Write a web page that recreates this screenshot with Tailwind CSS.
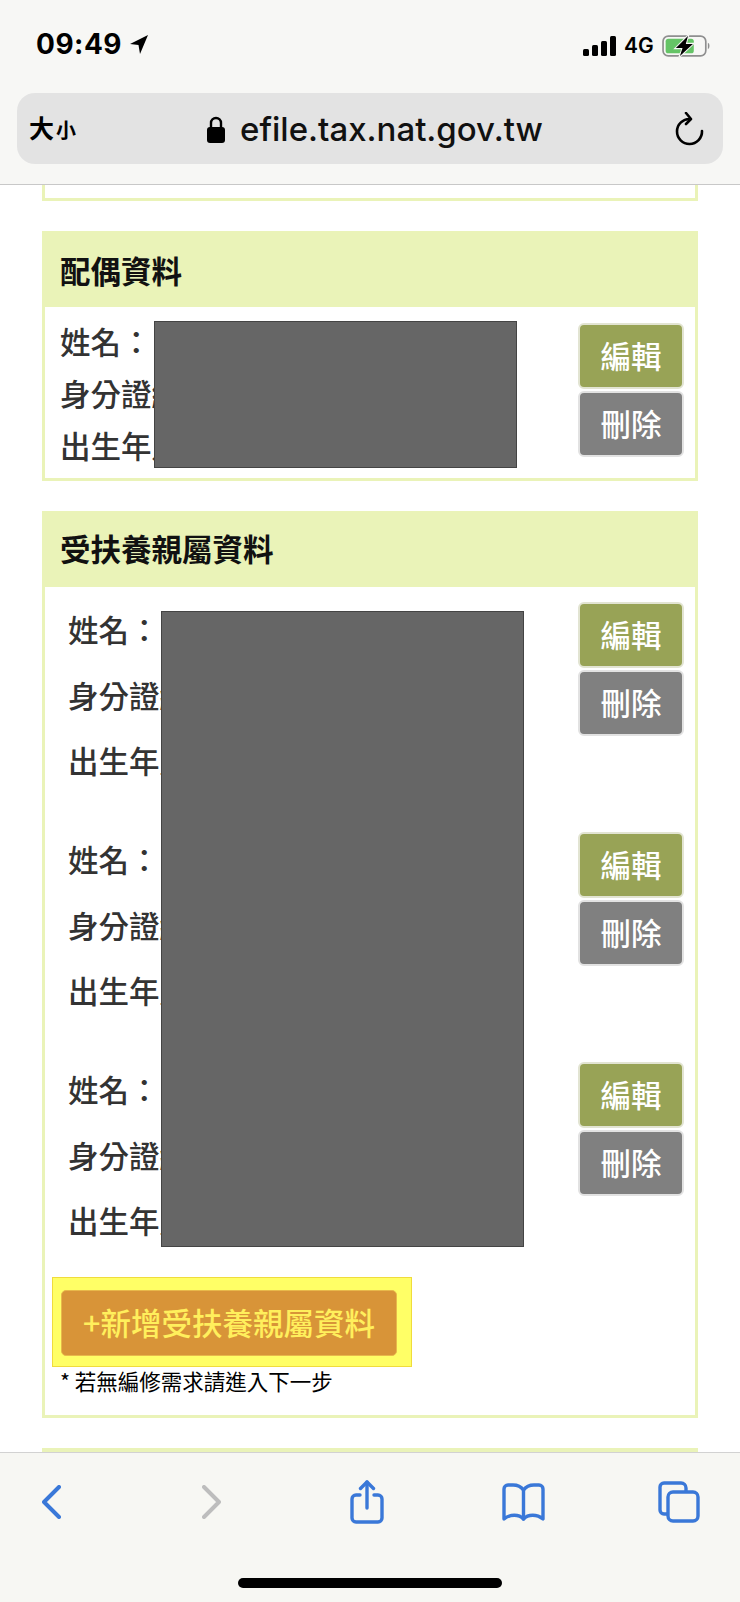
<!DOCTYPE html>
<html lang="zh-TW">
<head>
    <meta charset="UTF-8">
    <meta name="viewport" content="width=device-width, initial-scale=1.0">
    <title>efile.tax.nat.gov.tw</title>
    <script src="https://cdn.jsdelivr.net/npm/@tailwindcss/browser@4"></script>
</head>
<body class="bg-white font-['Noto_Sans_CJK_TC','Noto_Sans',sans-serif]">
<div class="w-[740px] h-[1602px] flex flex-col overflow-hidden">

    <!-- Status bar + address bar -->
    <header class="h-[185px] shrink-0 bg-[#f7f7f5] border-b border-[#c8c8c8]">
        <div class="h-[93px] flex items-start">
            <div class="flex items-center pl-[36px] pt-[28px] w-[300px]">
                <span class="font-['Inter',sans-serif] font-bold text-[28px] leading-[32px] text-black tracking-[0.5px]">09:49</span>
                <svg class="ml-[8px]" width="18" height="19" viewBox="0 0 18 19"><path d="M18 0 L0 9 L8.5 10 L10 19 Z" fill="#000"/></svg>
            </div>
            <div class="flex items-center ml-auto pt-[34px]">
                <svg width="33" height="20" viewBox="0 0 33 20" fill="#000">
                    <rect x="0" y="13" width="6" height="7" rx="1.5"/>
                    <rect x="9" y="9" width="6" height="11" rx="1.5"/>
                    <rect x="18" y="5" width="6" height="15" rx="1.5"/>
                    <rect x="27" y="0" width="6" height="20" rx="1.5"/>
                </svg>
                <span class="ml-[8px] w-[30px] font-['Inter',sans-serif] font-semibold text-[21px] leading-[20px] text-black">4G</span>
                <svg class="ml-[8px] mr-[29px]" width="49" height="24" viewBox="0 0 47 23">
                    <rect x="1" y="2" width="41" height="19" rx="5" fill="none" stroke="#8f8f8f" stroke-width="1.6"/>
                    <rect x="3.5" y="4.5" width="27" height="14" rx="2.5" fill="#65c466"/>
                    <path d="M44 8.500 C46 9 46 14 44 14.500 Z" fill="#8f8f8f"/>
                    <path d="M26 0 L12 14 H19 L16 23 L31 9 H23.500 Z" fill="#000" stroke="#f7f7f5" stroke-width="1"/>
                </svg>
            </div>
        </div>
        <div class="mx-[17px] w-[706px] h-[71px] rounded-[18px] bg-[#e3e3e3] flex items-center relative">
            <div class="pl-[12px] flex items-baseline text-black font-bold w-[190px]">
                <span class="text-[25px] leading-[30px]">大</span><span class="text-[20px] leading-[30px] ml-[2px]">小</span>
            </div>
            <svg width="18" height="27" viewBox="0 0 18 27" class="mt-[1px]">
                <path d="M4 12 V7 a5 5 0 0 1 10 0 V12" fill="none" stroke="#000" stroke-width="2.400"/>
                <rect x="0" y="11" width="18" height="16" rx="3" fill="#000"/>
            </svg>
            <span class="ml-[15px] font-['Inter',sans-serif] font-medium text-[33px] leading-[40px] text-[#111]">efile.tax.nat.gov.tw</span>
            <svg class="ml-auto mr-[18px]" width="30" height="34" viewBox="0 0 30 34" fill="none" stroke="#000" stroke-width="2.600" stroke-linecap="round" stroke-linejoin="round">
                <path d="M15 7 A12.500 12.500 0 1 0 27 19"/>
                <path d="M11 1 L16 7 L11 12"/>
            </svg>
        </div>
    </header>

    <!-- Page -->
    <main class="flex-1 min-h-0 overflow-hidden">
        <div class="mx-[42px] w-[656px] h-[16px] border-x-[3px] border-b-[3px] border-[#eaf3b8]"></div>

        <!-- 配偶資料 -->
        <section class="relative mx-[42px] w-[656px] mt-[30px] border-x-[3px] border-b-[3px] border-[#eaf3b8]">
            <h2 class="-mx-[3px] h-[76px] pl-[18px] pt-[3px] bg-[#eaf3b8] flex items-center text-[30.5px] font-bold text-[#111]">配偶資料</h2>
            <div class="h-[171px] pl-[15px] pr-[11px] flex justify-between">
                <div class="pt-[8px] text-[30.5px] leading-[52px] font-medium text-[#333]">
                    <div>姓名：</div>
                    <div>身分證統一編號：</div>
                    <div>出生年月日：</div>
                </div>
                <div class="pt-[16px] flex flex-col gap-[2px]">
                    <button class="w-[106px] h-[66px] rounded-[6px] border-2 border-[#e2e4d2] bg-[#98a356] text-white text-[30.5px] font-medium">編輯</button>
                    <button class="w-[106px] h-[66px] rounded-[6px] border-2 border-[#e2e2e2] bg-[#808080] text-white text-[30.5px] font-medium">刪除</button>
                </div>
            </div>
            <div class="absolute top-[90px] left-[109px] w-[363px] h-[147px] bg-[#666666] border border-[#444444]"></div>
        </section>

        <!-- 受扶養親屬資料 -->
        <section class="relative mx-[42px] w-[656px] mt-[30px] border-x-[3px] border-b-[3px] border-[#eaf3b8]">
            <h2 class="-mx-[3px] h-[76px] pl-[18px] bg-[#eaf3b8] flex items-center text-[30.5px] font-bold text-[#111]">受扶養親屬資料</h2>
            <div class="h-[828px] pt-[12px]">
                <div class="h-[230px] pl-[23px] pr-[11px] flex justify-between">
                    <div class="-mt-[2px] text-[30.5px] leading-[65.500px] font-medium text-[#333]">
                        <div>姓名：</div>
                        <div>身分證統一編號：</div>
                        <div>出生年月日：</div>
                    </div>
                    <div class="pt-[3px] flex flex-col gap-[2px]">
                        <button class="w-[106px] h-[66px] rounded-[6px] border-2 border-[#e2e4d2] bg-[#98a356] text-white text-[30.5px] font-medium">編輯</button>
                        <button class="w-[106px] h-[66px] rounded-[6px] border-2 border-[#e2e2e2] bg-[#808080] text-white text-[30.5px] font-medium">刪除</button>
                    </div>
                </div>
                <div class="h-[230px] pl-[23px] pr-[11px] flex justify-between">
                    <div class="-mt-[2px] text-[30.5px] leading-[65.500px] font-medium text-[#333]">
                        <div>姓名：</div>
                        <div>身分證統一編號：</div>
                        <div>出生年月日：</div>
                    </div>
                    <div class="pt-[3px] flex flex-col gap-[2px]">
                        <button class="w-[106px] h-[66px] rounded-[6px] border-2 border-[#e2e4d2] bg-[#98a356] text-white text-[30.5px] font-medium">編輯</button>
                        <button class="w-[106px] h-[66px] rounded-[6px] border-2 border-[#e2e2e2] bg-[#808080] text-white text-[30.5px] font-medium">刪除</button>
                    </div>
                </div>
                <div class="h-[200px] pl-[23px] pr-[11px] flex justify-between">
                    <div class="-mt-[2px] text-[30.5px] leading-[65.500px] font-medium text-[#333]">
                        <div>姓名：</div>
                        <div>身分證統一編號：</div>
                        <div>出生年月日：</div>
                    </div>
                    <div class="pt-[3px] flex flex-col gap-[2px]">
                        <button class="w-[106px] h-[66px] rounded-[6px] border-2 border-[#e2e4d2] bg-[#98a356] text-white text-[30.5px] font-medium">編輯</button>
                        <button class="w-[106px] h-[66px] rounded-[6px] border-2 border-[#e2e2e2] bg-[#808080] text-white text-[30.5px] font-medium">刪除</button>
                    </div>
                </div>
                <div class="ml-[7px] mt-[18px] w-[360px] h-[90px] bg-[#ffff66] border border-[#f0dc3c] pl-[8px] pt-[12px]">
                    <button class="w-[336px] h-[66px] rounded-[5px] border border-[#e8b84a] bg-[#d89438] text-[#ffef5c] text-[30.5px] font-medium">+新增受扶養親屬資料</button>
                </div>
                <p class="ml-[15px] -mt-[1px] text-[21.5px] leading-[30px] text-black">* 若無編修需求請進入下一步</p>
            </div>
            <div class="absolute top-[100px] left-[116px] w-[363px] h-[636px] bg-[#666666] border border-[#444444]"></div>
        </section>

        <div class="mx-[42px] w-[656px] mt-[30px] h-[40px] bg-[#eaf3b8]"></div>
    </main>

    <!-- Toolbar -->
    <footer class="h-[150px] shrink-0 bg-[#f7f7f3] border-t border-[#d2d2d2] relative">
        <div class="h-[98px] flex items-center pl-[42px]">
            <svg width="19" height="34" viewBox="0 0 19 34" fill="none" stroke="#3a78d8" stroke-width="4" stroke-linecap="round" stroke-linejoin="round"><path d="M17 2 L2 17 L17 32"/></svg>
            <svg class="ml-[141px]" width="19" height="34" viewBox="0 0 19 34" fill="none" stroke="#bdbdbd" stroke-width="4" stroke-linecap="round" stroke-linejoin="round"><path d="M2 2 L17 17 L2 32"/></svg>
            <svg class="ml-[129px]" width="34" height="44" viewBox="0 0 34 44" fill="none" stroke="#3a78d8" stroke-width="3.400" stroke-linecap="round" stroke-linejoin="round">
                <path d="M10 15 H6 a4 4 0 0 0 -4 4 V38 a4 4 0 0 0 4 4 H28 a4 4 0 0 0 4 -4 V19 a4 4 0 0 0 -4 -4 H24"/>
                <path d="M17 2 V28"/>
                <path d="M10.500 8.500 L17 2 L23.500 8.500"/>
            </svg>
            <svg class="ml-[118px]" width="43" height="38" viewBox="0 0 43 38" fill="none" stroke="#3a78d8" stroke-width="3.400" stroke-linecap="round" stroke-linejoin="round">
                <path d="M21.500 7 C19 3.500 15 2 11 2 H6 a4 4 0 0 0 -4 4 V36 C8 31 17 31 21.500 36 C26 31 35 31 41 36 V6 a4 4 0 0 0 -4 -4 H32 C28 2 24 3.500 21.500 7 Z"/>
                <path d="M21.500 7 V36"/>
            </svg>
            <svg class="ml-[113px]" width="42" height="42" viewBox="0 0 42 42" fill="none" stroke="#3a78d8" stroke-width="3.400" stroke-linecap="round" stroke-linejoin="round">
                <path d="M9 33 H6 a4 4 0 0 1 -4 -4 V6 a4 4 0 0 1 4 -4 H23 a5 5 0 0 1 5 5 V10"/>
                <rect x="10" y="11" width="30" height="29" rx="5"/>
            </svg>
        </div>
        <div class="mx-auto mt-[27px] w-[264px] h-[10px] rounded-full bg-black"></div>
    </footer>
</div>
</body>
</html>
